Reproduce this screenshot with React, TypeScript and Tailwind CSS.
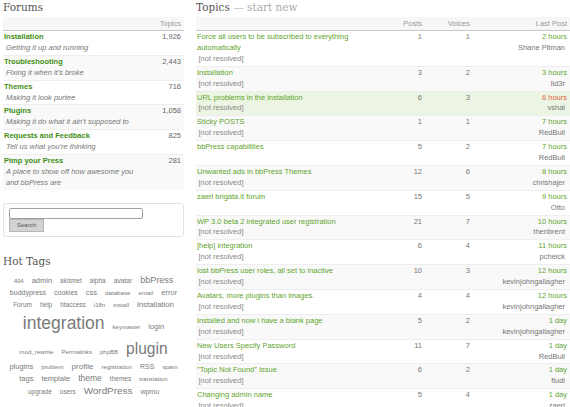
import React from 'react';

const forums = [
  { name: 'Installation', desc: 'Getting it up and running', count: '1,926' },
  { name: 'Troubleshooting', desc: "Fixing it when it's broke", count: '2,443' },
  { name: 'Themes', desc: 'Making it look purtee', count: '716' },
  { name: 'Plugins', desc: "Making it do what it ain't supposed to", count: '1,058' },
  { name: 'Requests and Feedback', desc: "Tell us what you're thinking", count: '825' },
  { name: 'Pimp your Press', desc: 'A place to show off how awesome you and bbPress are', count: '281' },
];

type Topic = { title: string; posts: number; voices: number; time: string; user: string; resolved?: boolean; hot?: boolean };

const topics: Topic[] = [
  { title: 'Force all users to be subscribed to everything automatically', posts: 1, voices: 1, time: '2 hours', user: 'Shane Pitman' },
  { title: 'Installation', posts: 3, voices: 2, time: '3 hours', user: 'lid3r' },
  { title: 'URL problems in the installation', posts: 6, voices: 3, time: '6 hours', user: 'vshal', hot: true },
  { title: 'Sticky POSTS', posts: 1, voices: 1, time: '7 hours', user: 'RedBull' },
  { title: 'bbPress capabilities', posts: 5, voices: 2, time: '7 hours', user: 'RedBull', resolved: true },
  { title: 'Unwanted ads in bbPress Themes', posts: 12, voices: 6, time: '8 hours', user: 'chrishajer' },
  { title: 'zaerl brigata.it forum', posts: 15, voices: 5, time: '9 hours', user: 'Otto', resolved: true },
  { title: 'WP 3.0 beta 2 integrated user registration', posts: 21, voices: 7, time: '10 hours', user: 'thenbrent' },
  { title: '[help] integration', posts: 6, voices: 4, time: '11 hours', user: 'pcheick' },
  { title: 'lost bbPress user roles, all set to inactive', posts: 10, voices: 3, time: '12 hours', user: 'kevinjohngallagher' },
  { title: 'Avatars, more plugins than images.', posts: 4, voices: 4, time: '12 hours', user: 'kevinjohngallagher' },
  { title: 'Installed and now i have a blank page', posts: 5, voices: 2, time: '1 day', user: 'kevinjohngallagher' },
  { title: 'New Users Specify Password', posts: 11, voices: 7, time: '1 day', user: 'RedBull' },
  { title: '"Topic Not Found" Issue', posts: 6, voices: 2, time: '1 day', user: 'fludi' },
  { title: 'Changing admin name', posts: 5, voices: 4, time: '1 day', user: 'zaerl' },
];

// [word, font size class]
const tagLines: { h: string; tags: [string, string][] }[] = [
  { h: 'h-[13px]', tags: [['404', 'text-[6px]'], ['admin', 'text-[7.5px]'], ['akismet', 'text-[6.3px]'], ['alpha', 'text-[6.5px]'], ['avatar', 'text-[6.7px]'], ['bbPress', 'text-[9px]']] },
  { h: 'h-[12px]', tags: [['buddypress', 'text-[7px]'], ['cookies', 'text-[7px]'], ['css', 'text-[7.5px]'], ['database', 'text-[6.2px]'], ['email', 'text-[6.2px]'], ['error', 'text-[7.5px]']] },
  { h: 'h-[12px]', tags: [['Forum', 'text-[6.5px]'], ['help', 'text-[6.5px]'], ['htaccess', 'text-[6.5px]'], ['i18n', 'text-[6px]'], ['install', 'text-[6.2px]'], ['installation', 'text-[7.8px]']] },
  { h: 'h-[26px]', tags: [['integration', 'text-[17.5px]'], ['keymaster', 'text-[6px]'], ['login', 'text-[7.5px]']] },
  { h: 'h-[24px]', tags: [['mod_rewrite', 'text-[6.2px]'], ['Permalinks', 'text-[6.2px]'], ['phpBB', 'text-[6px]'], ['plugin', 'text-[15.6px]']] },
  { h: 'h-[12px]', tags: [['plugins', 'text-[7.5px]'], ['problem', 'text-[6.2px]'], ['profile', 'text-[8px]'], ['registration', 'text-[6.2px]'], ['RSS', 'text-[7px]'], ['spam', 'text-[6.2px]']] },
  { h: 'h-[11px]', tags: [['tags', 'text-[7.5px]'], ['template', 'text-[7.5px]'], ['theme', 'text-[8.5px]'], ['themes', 'text-[6.5px]'], ['translation', 'text-[6.2px]']] },
  { h: 'h-[14px]', tags: [['upgrade', 'text-[6.5px]'], ['users', 'text-[6.5px]'], ['WordPress', 'text-[9.9px]'], ['wpmu', 'text-[7px]']] },
];

export default function App() {
  return (
    <div className="w-[570px] h-[407px] overflow-hidden bg-white flex pl-[3px] font-['Liberation_Sans',Arial,sans-serif] text-[7.5px] text-[#777]">
      {/* left column */}
      <div className="w-[181px] shrink-0">
        <h2 className="h-[17px] leading-[14px] font-['DejaVu_Serif',serif] text-[10.5px] text-[#555] font-normal">Forums</h2>
        <div className="h-[14px] bg-[#f7f7f7] border-b border-[#c8c8c8] flex items-center justify-end pr-[3px] text-[#999]">Topics</div>
        {forums.map((f, i) => (
          <div key={f.name} className={`grid grid-cols-[135px_1fr] py-[1px] leading-[10.9px] ${i > 0 ? 'border-t border-[#eeeeee]' : ''} ${i % 2 === 1 ? 'bg-[#f9f9f9]' : 'bg-white'}`}>
            <div>
              <div className="pl-[1px] font-bold text-[#3f8f14]">{f.name}</div>
              <div className="pl-[3px] italic text-[#777]">{f.desc}</div>
            </div>
            <div className="text-right pr-[3px] text-[#666]">{f.count}</div>
          </div>
        ))}

        <div className="mt-[13px] h-[34px] border border-[#e2e2e2] rounded-[3px] pl-[5px] pt-[4px]">
          <div className="w-[134px] h-[11px] border border-[#a0a0a0] rounded-[2px] bg-white" />
          <div className="w-[35px] h-[13px] bg-[#d2d2d2] border border-[#b8b8b8] flex items-center justify-center text-[6px] text-[#555]">Search</div>
        </div>

        <h2 className="mt-[17px] h-[13px] leading-[14px] font-['DejaVu_Serif',serif] text-[10.5px] text-[#555] font-normal">Hot Tags</h2>
        <div className="mt-[7px] text-[#7a7a7a]">
          {tagLines.map((line, i) => (
            <div key={i} className={`${line.h} flex items-center justify-center`}>
              <div className="flex items-baseline gap-x-[8px]">
                {line.tags.map(([t, s]) => (
                  <span key={t} className={`${s} leading-none`}>{t}</span>
                ))}
              </div>
            </div>
          ))}
        </div>
      </div>

      {/* right column */}
      <div className="ml-[12px] flex-1 min-w-0">
        <h2 className="h-[17px] leading-[14px] font-['DejaVu_Serif',serif] text-[10.5px] font-normal whitespace-nowrap">
          <span className="text-[#555]">Topics</span>
          <span className="text-[#aaa]"> — start new</span>
        </h2>
        <div className="h-[14px] bg-[#f7f7f7] border-b border-[#c8c8c8] grid grid-cols-[172px_56px_48px_1fr] items-center text-[#999]">
          <div />
          <div className="text-right pr-[2px]">Posts</div>
          <div className="text-right pr-[2px]">Voices</div>
          <div className="text-right pr-[3px]">Last Post</div>
        </div>
        {topics.map((t, i) => (
          <div
            key={i}
            className={`grid grid-cols-[172px_56px_48px_1fr] py-[1px] leading-[10.9px] ${i > 0 ? 'border-t border-[#eeeeee]' : ''} ${t.hot ? 'bg-[#ecf5e3]' : i % 2 === 1 ? 'bg-[#f9f9f9]' : 'bg-white'}`}
          >
            <div>
              <div className="pl-[1px] text-[#5fa52e]">{t.title}</div>
              <div className="pl-[2.5px] text-[#888] h-[10.9px]">{t.resolved ? '' : '[not resolved]'}</div>
            </div>
            <div className="text-right pr-[2px] text-[#777]">{t.posts}</div>
            <div className="text-right pr-[2px] text-[#777]">{t.voices}</div>
            <div className="text-right">
              <div className={`pr-[3px] ${t.hot ? 'text-[#e2683f]' : 'text-[#5fa52e]'}`}>{t.time}</div>
              <div className="pr-[5px] text-[#777]">{t.user}</div>
            </div>
          </div>
        ))}
      </div>
    </div>
  );
}
